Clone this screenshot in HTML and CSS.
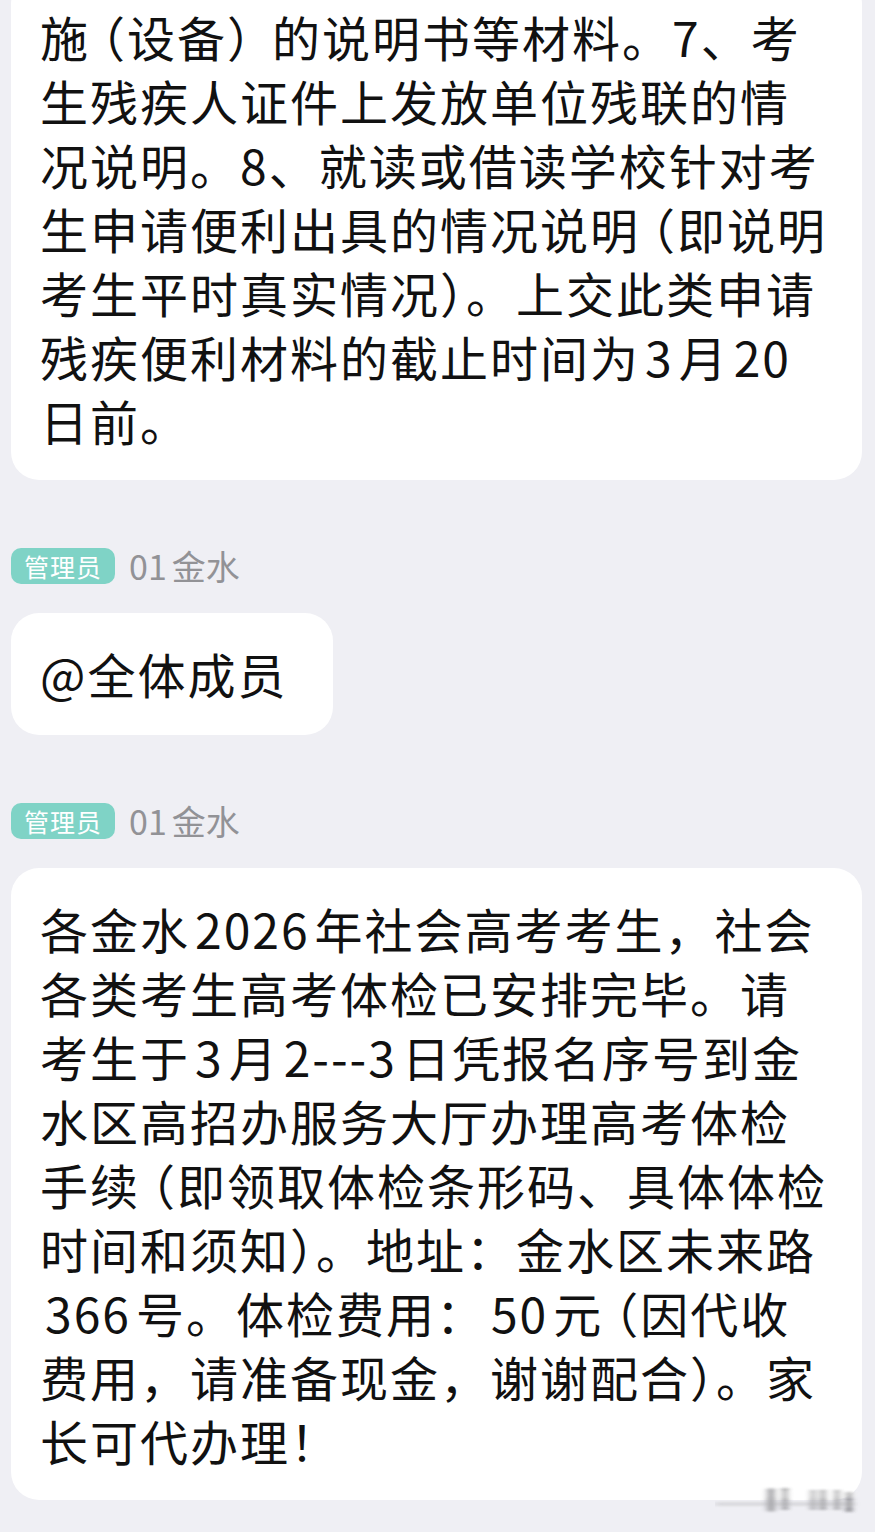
FILE: index.html
```html
<!DOCTYPE html>
<html lang="zh-CN">
<head>
    <meta charset="UTF-8">
    <meta name="viewport" content="width=device-width, initial-scale=1.0">
    <title>群聊</title>
    <link rel="stylesheet" href="styles.css">
</head>
<body>
    <div class="chat">
        <div class="bubble first">
            <p class="line">施<span class="op">（</span>设备<span class="cp">）</span>的说明书等材料。7、考</p>
            <p class="line">生残疾人证件上发放单位残联的情</p>
            <p class="line">况说明。8、就读或借读学校针对考</p>
            <p class="line">生申请便利出具的情况说明<span class="op">（</span>即说明</p>
            <p class="line">考生平时真实情况）。上交此类申请</p>
            <p class="line">残疾便利材料的截止时间为<span class="lat">3</span>月<span class="lat">20</span></p>
            <p class="line">日前。</p>
        </div>

        <div class="meta">
            <span class="badge">管理员</span>
            <span class="name">01<span class="gap"></span>金水</span>
        </div>
        <div class="bubble short">
            <p class="line">@全体成员</p>
        </div>

        <div class="meta">
            <span class="badge">管理员</span>
            <span class="name">01<span class="gap"></span>金水</span>
        </div>
        <div class="bubble">
            <p class="line">各金水<span class="lat">2026</span>年社会高考考生，社会</p>
            <p class="line">各类考生高考体检已安排完毕。请</p>
            <p class="line">考生于<span class="lat">3</span>月<span class="lat">2---3</span>日凭报名序号到金</p>
            <p class="line">水区高招办服务大厅办理高考体检</p>
            <p class="line">手续<span class="op">（</span>即领取体检条形码、具体体检</p>
            <p class="line">时间和须知）。地址：金水区未来路</p>
            <p class="line"><span class="lat">366</span>号。体检费用：<span class="lat">50</span>元<span class="op">（</span>因代收</p>
            <p class="line">费用，请准备现金，谢谢配合）。家</p>
            <p class="line">长可代办理！</p>
        </div>
    </div>

    <div class="watermark">
        <svg width="150" height="34" viewBox="0 0 150 34">
            <defs>
                <filter id="blur" x="-20%" y="-50%" width="140%" height="200%">
                    <feGaussianBlur stdDeviation="3 1.2"/>
                </filter>
            </defs>
            <g filter="url(#blur)">
                <rect x="0" y="8" width="140" height="5" fill="#ffffff" opacity="0.8"/>
                <rect x="0" y="18" width="140" height="4" fill="#d8d8dc"/>
                <rect x="52" y="4" width="8" height="24" rx="4" fill="#9a9a9e"/>
                <rect x="68" y="4" width="4" height="22" fill="#6a6a6e"/>
                <rect x="96" y="6" width="4" height="20" fill="#8a8a8e"/>
                <rect x="106" y="6" width="4" height="20" fill="#6a6a6e"/>
                <rect x="120" y="6" width="4" height="20" fill="#7a7a7e"/>
                <rect x="132" y="8" width="4" height="20" fill="#444448"/>
            </g>
        </svg>
    </div>
</body>
</html>
```

FILE: styles.css
```css
* {
    box-sizing: border-box;
    margin: 0;
    padding: 0;
}

body {
    background: #efeff4;
    color: #111111;
    font-family: "Noto Sans CJK SC", "Noto Sans", sans-serif;
    overflow: hidden;
    position: relative;
    height: 1532px;
}

.chat {
    display: flex;
    flex-direction: column;
    align-items: flex-start;
    padding: 0 13px 0 11px;
}

.bubble {
    background: #ffffff;
    border-radius: 28px;
    padding: 28px 29px 28px;
    width: 100%;
}

.bubble.first {
    margin-top: -24px;
}

.bubble.short {
    width: auto;
    padding-right: 46px;
    padding-bottom: 30px;
}

.line {
    font-size: 48px;
    line-height: 64px;
    letter-spacing: 2px;
    white-space: nowrap;
}

.lat {
    margin: 0 5px;
}

/* full-width brackets sit a little tighter in the original */
.op,
.cp {
    font-feature-settings: "halt";
}

.op {
    margin-left: 11px;
}

.cp {
    margin-right: 19px;
}

.meta {
    display: flex;
    align-items: center;
    gap: 14px;
    margin: 68px 0 29px;
}

.badge {
    background: #7fd3c6;
    color: #ffffff;
    font-size: 25px;
    line-height: 36px;
    height: 36px;
    padding: 0 13px;
    border-radius: 10px;
    letter-spacing: 1px;
}

.name {
    color: #929296;
    font-size: 34px;
    line-height: 36px;
}

.gap {
    display: inline-block;
    width: 5px;
}

.watermark {
    position: absolute;
    left: 715px;
    top: 1484px;
    opacity: 0.9;
}
```
